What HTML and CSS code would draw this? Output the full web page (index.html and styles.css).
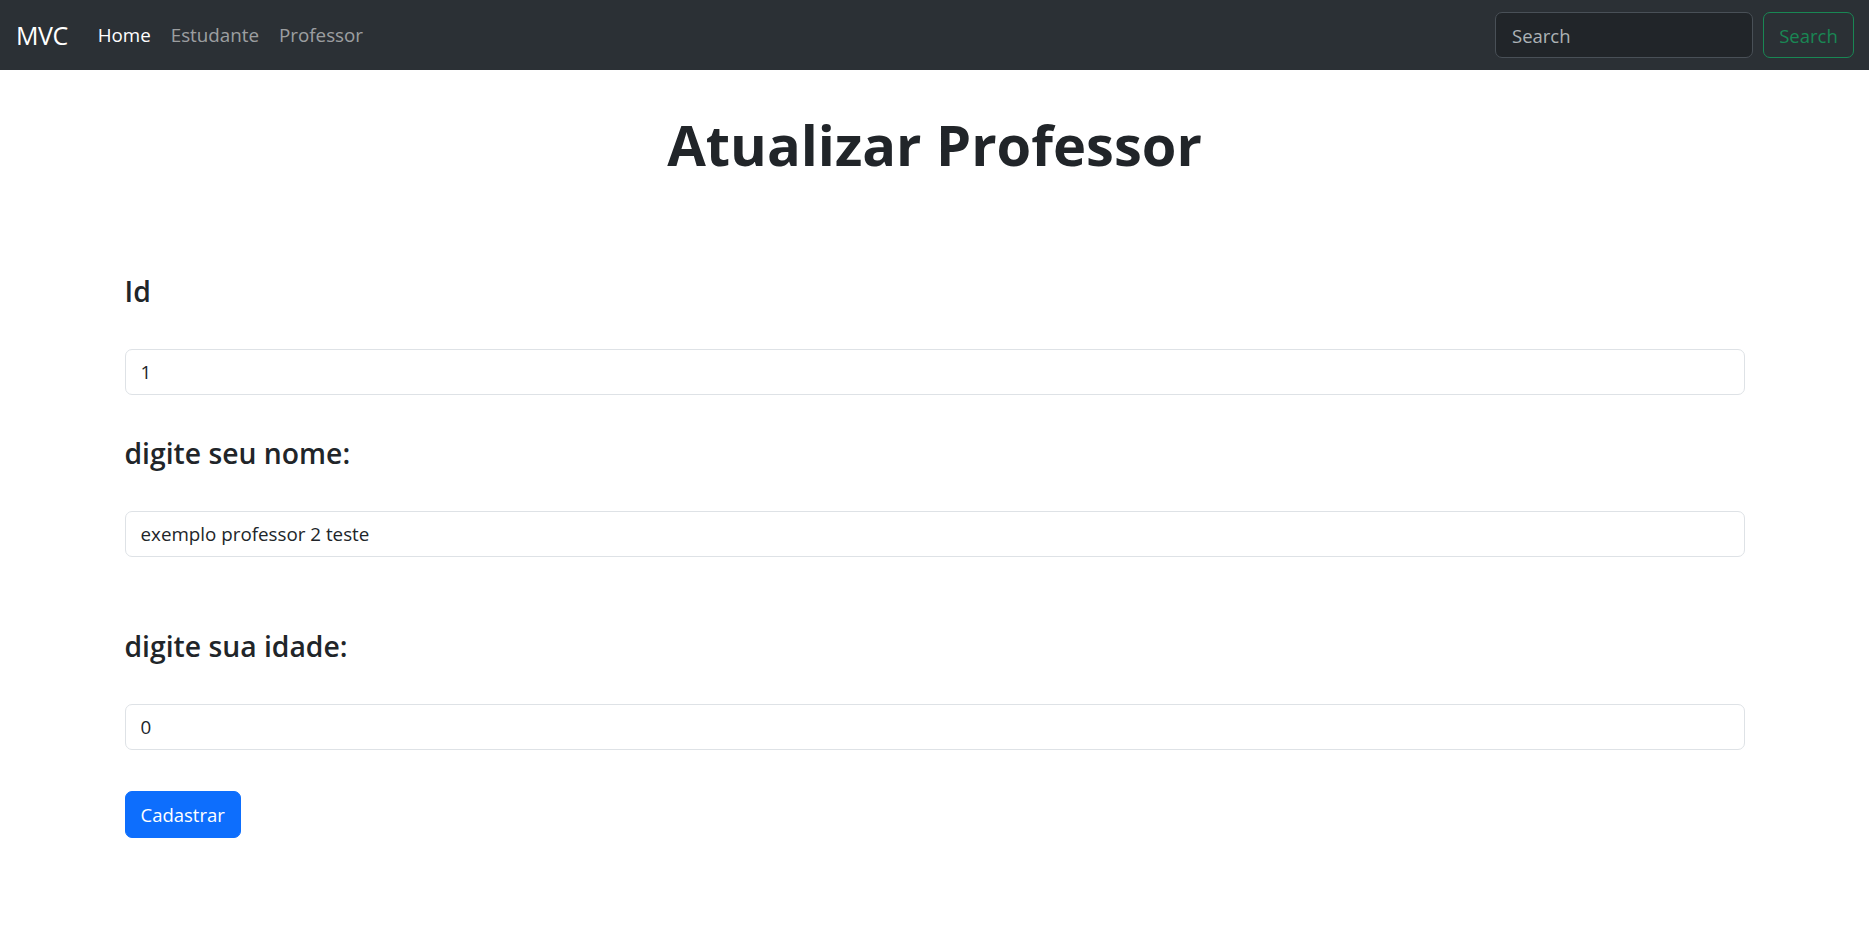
FILE: index.html
```html
<!DOCTYPE html>
<html lang="pt">
<head>
<meta charset="utf-8">
<title>Atualizar Professor</title>
<link rel="stylesheet" href="styles.css">
</head>
<body>
<nav class="navbar">
  <div class="nav-left">
    <a class="brand" href="#">MVC</a>
    <ul class="nav-links">
      <li><a class="nav-link active" href="#">Home</a></li>
      <li><a class="nav-link" href="#">Estudante</a></li>
      <li><a class="nav-link" href="#">Professor</a></li>
    </ul>
  </div>
  <form class="search-form">
    <input class="search-input" type="search" placeholder="Search">
    <button class="search-btn" type="button">Search</button>
  </form>
</nav>

<main class="container">
  <h1 class="title">Atualizar Professor</h1>
  <form class="edit-form">
    <h3 class="field-label">Id</h3>
    <input class="field-input" type="text" value="1">
    <h3 class="field-label">digite seu nome:</h3>
    <input class="field-input" type="text" value="exemplo professor 2 teste">
    <h3 class="field-label spaced">digite sua idade:</h3>
    <input class="field-input" type="text" value="0">
    <button class="submit-btn" type="button">Cadastrar</button>
  </form>
</main>
</body>
</html>
```

FILE: styles.css
```css
* { box-sizing: border-box; }

body {
  margin: 0;
  font-family: "Open Sans", "Noto Sans", sans-serif;
  color: #212529;
  background: #fff;
}

.navbar {
  height: 70px;
  background: #2b3035;
  display: flex;
  align-items: center;
  justify-content: space-between;
  padding: 0 15px 0 16px;
}

.nav-left {
  display: flex;
  align-items: center;
}

.brand {
  color: #fff;
  text-decoration: none;
  font-size: 25px;
  margin-right: 20px;
  letter-spacing: -0.5px;
}

.nav-links {
  list-style: none;
  margin: 0;
  padding: 0;
  display: flex;
}

.nav-link {
  display: block;
  padding: 0 10px;
  font-size: 18.8px;
  color: rgba(255, 255, 255, 0.55);
  text-decoration: none;
}

.nav-link.active { color: #fff; }

.search-form {
  display: flex;
  gap: 10px;
}

.search-input {
  width: 258px;
  height: 46px;
  background: #212529;
  border: 1px solid #495057;
  border-radius: 7px;
  padding: 0 16px;
  font-family: inherit;
  font-size: 18.5px;
  color: #dee2e6;
  outline: none;
}

.search-input::placeholder { color: rgba(222, 226, 230, 0.75); }

.search-btn {
  width: 91px;
  height: 46px;
  background: transparent;
  border: 1px solid #198754;
  border-radius: 7px;
  color: #198754;
  font-family: inherit;
  font-size: 18.5px;
  padding: 0;
}

.container {
  max-width: 1650px;
  margin: 0 auto;
  padding: 0 15px;
}

.title {
  margin: 41px 0 0;
  text-align: center;
  font-size: 56px;
  line-height: 67px;
  font-weight: 700;
}

.edit-form {
  display: flex;
  flex-direction: column;
  align-items: flex-start;
  margin-top: 95px;
}

.field-label {
  margin: 0 0 40px;
  font-size: 28.3px;
  line-height: 36px;
  font-weight: 600;
}

.field-label.spaced { margin-top: 31px; }

.field-input {
  width: 100%;
  height: 46px;
  border: 1px solid #dee2e6;
  border-radius: 7px;
  padding: 0 15px;
  font-family: inherit;
  font-size: 18.8px;
  color: #212529;
  margin: 0 0 40px;
  outline: none;
}

.submit-btn {
  margin-top: 1px;
  height: 47px;
  padding: 0 15px;
  background: #0d6efd;
  border: 1px solid #0d6efd;
  border-radius: 7px;
  color: #fff;
  font-family: inherit;
  font-size: 18.5px;
}
```
